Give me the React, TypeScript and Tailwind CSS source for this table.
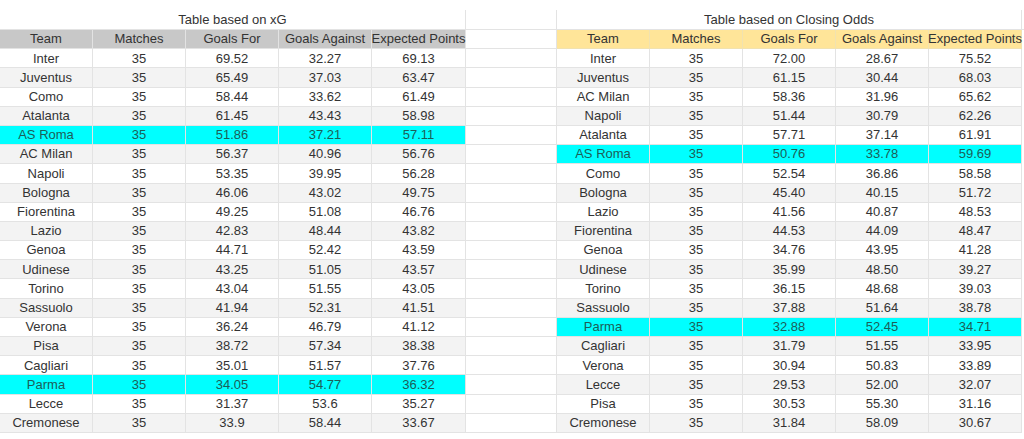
import React from "react";

type Row = [string, string, string, string, string];

const left: Row[] = [
  ["Inter", "35", "69.52", "32.27", "69.13"],
  ["Juventus", "35", "65.49", "37.03", "63.47"],
  ["Como", "35", "58.44", "33.62", "61.49"],
  ["Atalanta", "35", "61.45", "43.43", "58.98"],
  ["AS Roma", "35", "51.86", "37.21", "57.11"],
  ["AC Milan", "35", "56.37", "40.96", "56.76"],
  ["Napoli", "35", "53.35", "39.95", "56.28"],
  ["Bologna", "35", "46.06", "43.02", "49.75"],
  ["Fiorentina", "35", "49.25", "51.08", "46.76"],
  ["Lazio", "35", "42.83", "48.44", "43.82"],
  ["Genoa", "35", "44.71", "52.42", "43.59"],
  ["Udinese", "35", "43.25", "51.05", "43.57"],
  ["Torino", "35", "43.04", "51.55", "43.05"],
  ["Sassuolo", "35", "41.94", "52.31", "41.51"],
  ["Verona", "35", "36.24", "46.79", "41.12"],
  ["Pisa", "35", "38.72", "57.34", "38.38"],
  ["Cagliari", "35", "35.01", "51.57", "37.76"],
  ["Parma", "35", "34.05", "54.77", "36.32"],
  ["Lecce", "35", "31.37", "53.6", "35.27"],
  ["Cremonese", "35", "33.9", "58.44", "33.67"],
];

const right: Row[] = [
  ["Inter", "35", "72.00", "28.67", "75.52"],
  ["Juventus", "35", "61.15", "30.44", "68.03"],
  ["AC Milan", "35", "58.36", "31.96", "65.62"],
  ["Napoli", "35", "51.44", "30.79", "62.26"],
  ["Atalanta", "35", "57.71", "37.14", "61.91"],
  ["AS Roma", "35", "50.76", "33.78", "59.69"],
  ["Como", "35", "52.54", "36.86", "58.58"],
  ["Bologna", "35", "45.40", "40.15", "51.72"],
  ["Lazio", "35", "41.56", "40.87", "48.53"],
  ["Fiorentina", "35", "44.53", "44.09", "48.47"],
  ["Genoa", "35", "34.76", "43.95", "41.28"],
  ["Udinese", "35", "35.99", "48.50", "39.27"],
  ["Torino", "35", "36.15", "48.68", "39.03"],
  ["Sassuolo", "35", "37.88", "51.64", "38.78"],
  ["Parma", "35", "32.88", "52.45", "34.71"],
  ["Cagliari", "35", "31.79", "51.55", "33.95"],
  ["Verona", "35", "30.94", "50.83", "33.89"],
  ["Lecce", "35", "29.53", "52.00", "32.07"],
  ["Pisa", "35", "30.53", "55.30", "31.16"],
  ["Cremonese", "35", "31.84", "58.09", "30.67"],
];

const headers = ["Team", "Matches", "Goals For", "Goals Against", "Expected Points"];
const leftW = ["w-[93px]", "w-[93px]", "w-[93px]", "w-[93px]", "w-[94px]"];
const rightW = ["w-[93px]", "w-[93px]", "w-[93px]", "w-[93px]", "w-[93px]"];

const cell =
  "flex items-center justify-center shrink-0 h-full border-r border-b border-[#e3e3e3] whitespace-nowrap";

function Cells({
  row,
  widths,
  bg,
  text,
}: {
  row: string[];
  widths: string[];
  bg: string;
  text: string;
}) {
  return (
    <>
      {row.map((v, i) => (
        <div key={i} className={`${cell} ${widths[i]} ${bg} ${text}`}>
          {v}
        </div>
      ))}
    </>
  );
}

function rowBg(i: number, hl: boolean) {
  if (hl) return "bg-[#00ffff]";
  return i % 2 === 1 ? "bg-[#f3f3f3]" : "bg-white";
}

export default function App() {
  return (
    <div
      className="w-[1024px] h-[439px] bg-white text-[13px] text-[#333333] overflow-hidden"
      style={{ fontFamily: '"Liberation Sans", Arial, sans-serif' }}
    >
      <div className="h-[10px]" />
      {/* Title row */}
      <div className="flex h-[19px]">
        <div className="flex items-center justify-center w-[466px] h-full border-r border-[#e3e3e3]">
          Table based on xG
        </div>
        <div className="w-[91px] h-full border-r border-[#e3e3e3]" />
        <div className="flex items-center justify-center w-[465px] h-full border-r border-[#e3e3e3]">
          Table based on Closing Odds
        </div>
      </div>
      {/* Header row */}
      <div className="flex h-[19.2px] border-t border-[#e3e3e3] box-content">
        <Cells row={headers} widths={leftW} bg="bg-[#c8c8c8] border-[#dcdcdc]" text="text-[#333333]" />
        <div className={`${cell} w-[91px] bg-white`} />
        <Cells row={headers} widths={rightW} bg="bg-[#ffe599] border-[#f1e2b0]" text="text-[#333333]" />
      </div>
      {left.map((l, i) => {
        const r = right[i];
        const lh = l[0] === "AS Roma" || l[0] === "Parma";
        const rh = r[0] === "AS Roma" || r[0] === "Parma";
        return (
          <div key={i} className="flex h-[19.2px]">
            <Cells
              row={l}
              widths={leftW}
              bg={rowBg(i, lh)}
              text={lh ? "text-[#1d5e58]" : "text-[#333333]"}
            />
            <div className={`${cell} w-[91px] bg-white`} />
            <Cells
              row={r}
              widths={rightW}
              bg={rowBg(i, rh)}
              text={rh ? "text-[#1d5e58]" : "text-[#333333]"}
            />
          </div>
        );
      })}
    </div>
  );
}
